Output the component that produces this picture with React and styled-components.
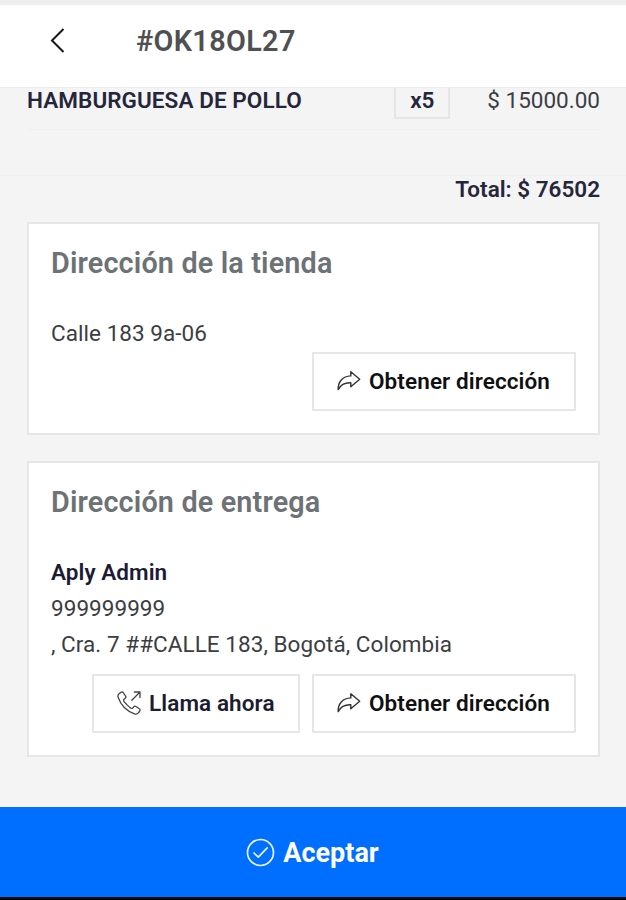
import React from "react";
import styled, { createGlobalStyle } from "styled-components";

const GlobalStyle = createGlobalStyle`
  * {
    box-sizing: border-box;
  }

  body {
    margin: 0;
    background-color: #f4f4f4;
    font-family: Roboto, 'Liberation Sans', sans-serif;
  }
`;

const Screen = styled.div`
  display: flex;
  flex-direction: column;
  height: 900px;
  overflow: hidden;
  color: #3c3d43;
  font-size: 22.5px;
  line-height: 36px;
`;

const Header = styled.header`
  display: flex;
  align-items: center;
  flex: none;
  height: 88px;
  padding: 0 0 11px 48px;
  border-top: 5px solid #eeeeee;
  border-bottom: 1px solid #ededed;
  background-color: #ffffff;
`;

const BackButton = styled.button`
  display: flex;
  width: 20px;
  margin-right: 68px;
  padding: 0 0 2px;
  border: none;
  background-color: inherit;
`;

const OrderNumber = styled.h1`
  margin: 0;
  font-weight: 600;
  font-size: 28.8px;
  line-height: 34px;
  letter-spacing: 0.35px;
  color: #505052;
`;

const Content = styled.main`
  flex: 1;
`;

const ProductRow = styled.div`
  display: flex;
  height: 42px;
  margin: 0 26px 0 27px;
  border-bottom: 1px solid #efefef;
  line-height: 25px;
`;

const ProductName = styled.span`
  flex: 1;
  font-weight: 600;
  letter-spacing: 0.07px;
  color: #25263b;
`;

const Quantity = styled.span`
  width: 56px;
  height: 31px;
  margin-right: 37px;
  border: 2px solid #e6e6e6;
  border-top: none;
  font-weight: 600;
  text-align: center;
  color: #25263b;
`;

const Price = styled.span`
  letter-spacing: 0;
`;

const Total = styled.div`
  margin-top: 45px;
  padding: 0 26px;
  border-top: 1px solid #efefef;
  font-weight: 600;
  line-height: 27px;
  text-align: right;
  color: #25263b;
`;

const Card = styled.section`
  height: ${({ $height }) => $height}px;
  margin: ${({ $gap }) => $gap}px 26px 0 27px;
  padding: 21px 22px 0;
  border: 2px solid #e6e6e6;
  background-color: #ffffff;
`;

const CardTitle = styled.h2`
  margin: 0 0 34px;
  font-weight: 600;
  font-size: 28.8px;
  line-height: 36px;
  letter-spacing: 0.15px;
  color: #6c7276;
`;

const CardText = styled.p`
  margin: 0;
  letter-spacing: 0.05px;
`;

const CustomerName = styled(CardText)`
  font-weight: 600;
  color: #1b1c33;
`;

const Actions = styled.div`
  display: flex;
  justify-content: flex-end;
  gap: 12px;
  margin-top: ${({ $offset }) => $offset}px;
`;

const ActionButton = styled.button`
  display: flex;
  align-items: center;
  width: ${({ $width }) => $width}px;
  height: 59px;
  padding: 0 0 1px 23px;
  border: 2px solid #e6e6e6;
  border-radius: 1px;
  background-color: #ffffff;
  font-family: inherit;
  font-weight: 600;
  font-size: 22.5px;
  letter-spacing: 0.1px;
  white-space: nowrap;
  color: ${({ $color }) => $color || "#101012"};

  svg {
    flex: none;
    margin-right: 8px;
  }
`;

const AcceptButton = styled.button`
  display: flex;
  align-items: center;
  justify-content: center;
  gap: 8px;
  flex: none;
  height: 93px;
  padding: 2px 1px 0 0;
  border: none;
  border-bottom: 3px solid #05070c;
  background-color: #006fff;
  font-family: inherit;
  font-weight: 700;
  font-size: 27px;
  color: #ffffff;

  svg {
    margin-bottom: 2px;
  }
`;

const BackIcon = () => (
  <svg width="20" height="26" viewBox="0 0 20 26" fill="none" stroke="#161616" strokeWidth="2">
    <path d="M15.5 2 L4 13.5 L15.5 25" />
  </svg>
);

const ShareIcon = () => (
  <svg width="24" height="24" viewBox="0 0 24 24" fill="none" stroke="#333333" strokeWidth="1.4" strokeLinejoin="round">
    <path d="M13.8 2.8 L22.7 10.3 L13.8 17.8 V13.8 C7.8 13.5 4 15.2 1.2 20.6 C.9 13 5.5 7.3 13.8 6.9 Z" />
  </svg>
);

const CallIcon = () => (
  <svg width="24" height="24" viewBox="0 0 24 24" fill="none" stroke="#444444" strokeWidth="1.3" strokeLinecap="round" strokeLinejoin="round">
    <path d="M2.1 2.7 L4 1.2 C4.8 .7 5.7 .9 6.2 1.7 L8.5 5 C9.1 5.8 8.9 6.7 8.2 7.3 L6.9 8.4 C6.3 9 6.5 9.6 7 10.4 C9 13.2 10.9 15.1 13.6 17 C14.4 17.5 15 17.7 15.6 17.1 L16.7 15.8 C17.3 15.1 18.2 14.9 19 15.5 L22.3 17.8 C23.1 18.3 23.3 19.2 22.8 20 L21.3 21.9 C20.4 23 18.9 23.3 17.5 22.8 C9.7 20.1 3.9 14.3 1.2 6.5 C.7 5.1 1 3.6 2.1 2.7 Z" />
    <path d="M14.8 9.2 L23 1 M17.4 1 H23 V6.6" />
  </svg>
);

const CheckIcon = () => (
  <svg width="29" height="29" viewBox="0 0 29 29" fill="none" stroke="#e7f4ff" strokeWidth="1.7" strokeLinecap="round" strokeLinejoin="round">
    <circle cx="14.5" cy="14.5" r="13" />
    <path d="M8 15 L12.3 19.2 L21.2 9.8" />
  </svg>
);

const DirectionsButton = () => (
  <ActionButton $width={264}>
    <ShareIcon />
    Obtener dirección
  </ActionButton>
);

const App = () => (
  <Screen>
    <GlobalStyle />
    <Header>
      <BackButton aria-label="Volver">
        <BackIcon />
      </BackButton>
      <OrderNumber>#OK18OL27</OrderNumber>
    </Header>
    <Content>
      <ProductRow>
        <ProductName>HAMBURGUESA DE POLLO</ProductName>
        <Quantity>x5</Quantity>
        <Price>$ 15000.00</Price>
      </ProductRow>
      <Total>Total: $ 76502</Total>
      <Card $height={213} $gap={19}>
        <CardTitle>Dirección de la tienda</CardTitle>
        <CardText>Calle 183 9a-06</CardText>
        <Actions $offset={1}>
          <DirectionsButton />
        </Actions>
      </Card>
      <Card $height={296} $gap={26}>
        <CardTitle>Dirección de entrega</CardTitle>
        <CustomerName>Aply Admin</CustomerName>
        <CardText>999999999</CardText>
        <CardText>, Cra. 7 ##CALLE 183, Bogotá, Colombia</CardText>
        <Actions $offset={12}>
          <ActionButton $width={208} $color="#1b1c30">
            <CallIcon />
            Llama ahora
          </ActionButton>
          <DirectionsButton />
        </Actions>
      </Card>
    </Content>
    <AcceptButton>
      <CheckIcon />
      Aceptar
    </AcceptButton>
  </Screen>
);

export default App;
